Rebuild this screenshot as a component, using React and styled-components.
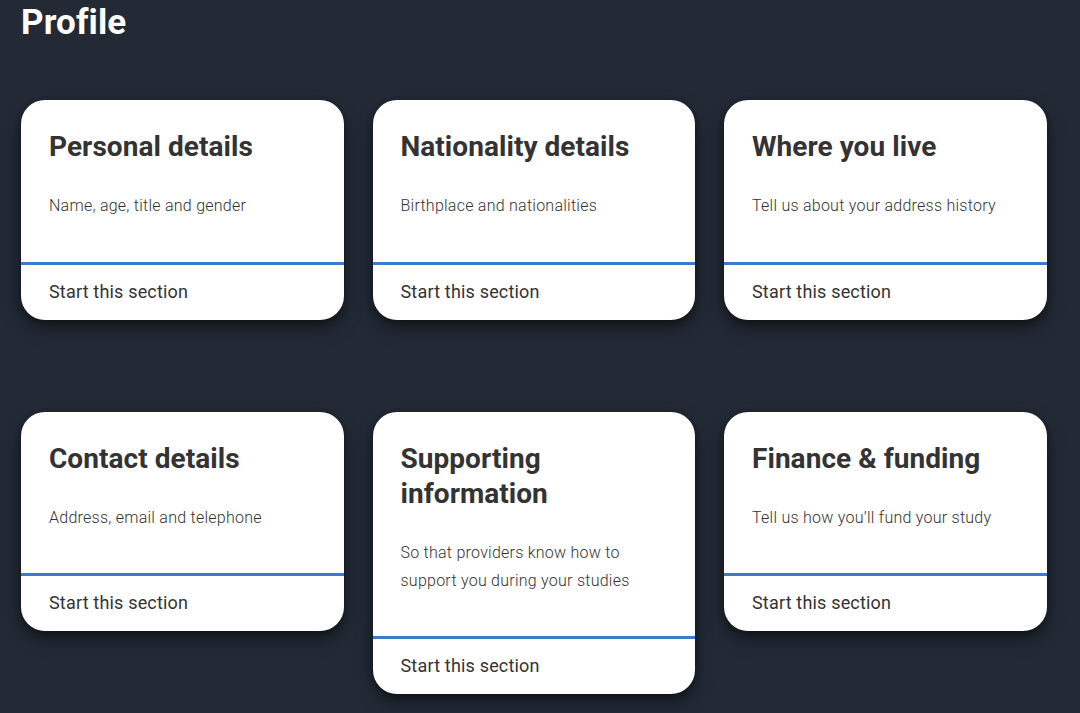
import React from "react";
import styled, { createGlobalStyle } from "styled-components";

const Global = createGlobalStyle`
  html, body { margin: 0; padding: 0; background: #232a36; }
  body { font-family: Roboto, "Noto Sans", "Liberation Sans", sans-serif; }
`;

const Page = styled.main`
  min-height: 713px;
  box-sizing: border-box;
  padding: 3px 21px 0 21px;
  background: #232a36;
`;

const Heading = styled.h1`
  margin: 0;
  font-size: 35px;
  line-height: 40px;
  font-weight: 700;
  color: #ffffff;
  letter-spacing: 0.1px;
`;

const Grid = styled.div`
  margin-top: 57px;
  display: grid;
  grid-template-columns: repeat(3, 322.5px);
  column-gap: 29px;
  row-gap: 92px;
  align-items: start;
`;

const Card = styled.a`
  display: flex;
  flex-direction: column;
  background: #ffffff;
  border-radius: 24px;
  overflow: hidden;
  text-decoration: none;
  color: #333333;
  box-shadow: 0 8px 18px rgba(0, 0, 0, 0.45), 0 2px 6px rgba(0, 0, 0, 0.3);
`;

const Body = styled.div`
  padding: 29px 28px 41.5px 28px;
  border-bottom: 3px solid #3a7bcd;
`;

const Title = styled.h2`
  margin: 0 0 28px 0;
  font-size: 28px;
  line-height: 35px;
  font-weight: 700;
  color: #333333;
  letter-spacing: 0.05px;
`;

const Desc = styled.p`
  margin: 0;
  font-size: 16px;
  line-height: 28px;
  font-weight: 300;
  color: #333333;
  letter-spacing: 0.25px;
`;

const Footer = styled.div`
  padding: 13px 28px 15px 28px;
  font-size: 18px;
  line-height: 27px;
  font-weight: 400;
  color: #333333;
  letter-spacing: 0.18px;
`;

const sections = [
  { title: "Personal details", desc: "Name, age, title and gender" },
  { title: "Nationality details", desc: "Birthplace and nationalities" },
  { title: "Where you live", desc: "Tell us about your address history" },
  { title: "Contact details", desc: "Address, email and telephone" },
  {
    title: "Supporting information",
    desc: "So that providers know how to support you during your studies",
  },
  { title: "Finance & funding", desc: "Tell us how you’ll fund your study" },
];

const TitleWrap = styled.span`
  display: block;
  max-width: ${(p) => (p.$narrow ? "200px" : "none")};
`;

const DescWrap = styled.span`
  display: block;
  max-width: ${(p) => (p.$narrow ? "250px" : "none")};
`;

export default function App() {
  return (
    <>
      <Global />
      <Page>
        <Heading>Profile</Heading>
        <Grid>
          {sections.map((s, i) => (
            <Card key={s.title} href="#">
              <Body>
                <Title>
                  <TitleWrap $narrow={i === 4}>{s.title}</TitleWrap>
                </Title>
                <Desc>
                  <DescWrap $narrow={i === 4}>{s.desc}</DescWrap>
                </Desc>
              </Body>
              <Footer>Start this section</Footer>
            </Card>
          ))}
        </Grid>
      </Page>
    </>
  );
}
